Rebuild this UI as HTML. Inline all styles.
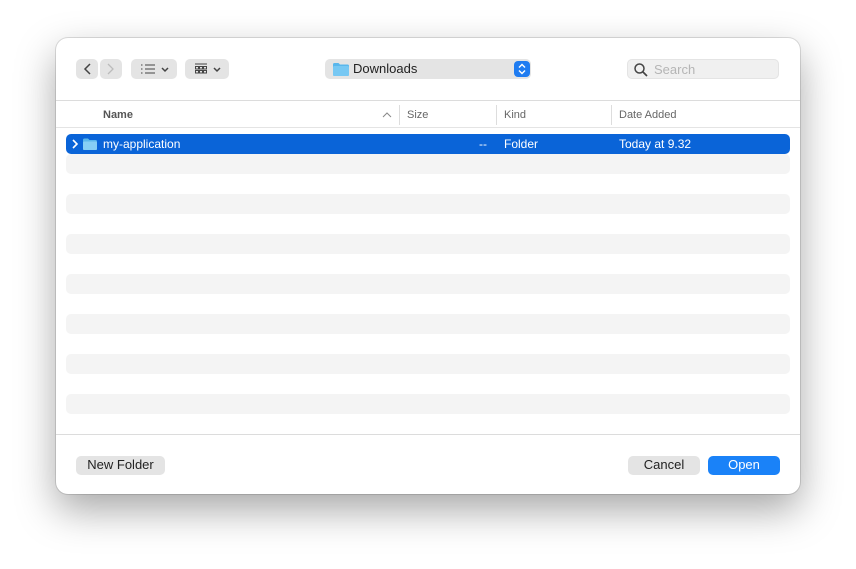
<!DOCTYPE html><html><head><style>
body{margin:0;width:856px;height:569px;background:#fff;font-family:"Liberation Sans",sans-serif;position:relative;overflow:hidden}
.win{position:absolute;left:56px;top:38px;width:744px;height:456px;background:#fff;border-radius:12px;box-shadow:0 0 0 1px rgba(0,0,0,.12),0 16px 40px rgba(0,0,0,.35)}
.a{position:absolute}
.btn{position:absolute;background:#e4e4e4;border-radius:5px}
.t{position:absolute;font-size:12px;color:#333;white-space:nowrap}
.h{font-size:11px;color:#666}
.row{position:absolute;left:10px;width:724px;height:20px;border-radius:5px;background:#f4f4f4}
.sep{position:absolute;width:1px;background:#ddd;top:67px;height:20px}
</style></head><body>
<div class="win">
<div class="btn" style="left:20px;top:21px;width:22px;height:20px"></div>
<div class="btn" style="left:44px;top:21px;width:22px;height:20px"></div>
<svg class="a" style="left:20px;top:21px" width="46" height="20"><path d="M14 5l-5 5 5 5" stroke="#444" stroke-width="1.5" fill="none"/><path d="M32 5l5 5-5 5" stroke="#bbb" stroke-width="1.3" fill="none"/></svg>
<div class="btn" style="left:75px;top:21px;width:46px;height:20px"></div>
<svg class="a" style="left:75px;top:21px" width="46" height="20"><g stroke="#444" stroke-width="1.1"><path d="M14 6h10M14 10h10M14 14h10M10 6h1.5M10 10h1.5M10 14h1.5"/><path d="M31 9l3 3 3-3" fill="none" stroke-width="1.5"/></g></svg>
<div class="btn" style="left:129px;top:21px;width:44px;height:20px"></div>
<svg class="a" style="left:129px;top:21px" width="44" height="20"><g stroke="#444" stroke-width="1" fill="none"><path d="M10 5h12"/><rect x="10.5" y="7.5" width="3" height="2.5"/><rect x="14.5" y="7.5" width="3" height="2.5"/><rect x="18.5" y="7.5" width="3" height="2.5"/><rect x="10.5" y="11.5" width="3" height="2.5"/><rect x="14.5" y="11.5" width="3" height="2.5"/><rect x="18.5" y="11.5" width="3" height="2.5"/><path d="M29 9l3 3 3-3" stroke-width="1.5"/></g></svg>
<div class="btn" style="left:269px;top:21px;width:206px;height:20px"></div>
<svg class="a" style="left:277px;top:24px" width="16" height="14"><path d="M0 2.5q0-1.5 1.5-1.5h4l1.5 1.5h7.5q1.5 0 1.5 1.5v8.5q0 1.5-1.5 1.5h-13q-1.5 0-1.5-1.5z" fill="#5ab7ec"/><rect x="0" y="4" width="16" height="10" rx="1.5" fill="#77c8f3"/></svg>
<div class="t" style="left:297px;top:23px;font-size:13px;color:#222">Downloads</div>
<div class="a" style="left:458px;top:23px;width:16px;height:16px;background:#1f7cf1;border-radius:4px"></div>
<svg class="a" style="left:458px;top:23px" width="16" height="16"><path d="M5 6.5l3-3 3 3M5 9.5l3 3 3-3" stroke="#fff" stroke-width="1.4" fill="none"/></svg>
<div class="a" style="left:571px;top:21px;width:152px;height:20px;background:#f0f0f0;border-radius:5px;box-shadow:inset 0 0 0 1px #e4e4e4"></div>
<svg class="a" style="left:577px;top:24px" width="16" height="16"><circle cx="6.5" cy="6.5" r="4.5" stroke="#444" stroke-width="1.5" fill="none"/><path d="M10 10l4 4" stroke="#444" stroke-width="1.7"/></svg>
<div class="t" style="left:598px;top:24px;font-size:13px;color:#b5b5b5">Search</div>
<div class="a" style="left:0;top:62px;width:744px;height:1px;background:#dcdcdc"></div>
<div class="t h" style="left:47px;top:71px;font-weight:bold;color:#555">Name</div>
<svg class="a" style="left:326px;top:73px" width="10" height="8"><path d="M1 6l4-4 4 4" stroke="#888" fill="none"/></svg>
<div class="sep" style="left:343px"></div>
<div class="t h" style="left:351px;top:71px">Size</div>
<div class="sep" style="left:440px"></div>
<div class="t h" style="left:448px;top:71px">Kind</div>
<div class="sep" style="left:555px"></div>
<div class="t h" style="left:563px;top:71px">Date Added</div>
<div class="a" style="left:0;top:89px;width:744px;height:1px;background:#e4e4e4"></div>
<div class="row" style="top:96px;background:#0a64d8"></div>
<svg class="a" style="left:15px;top:100px" width="8" height="12"><path d="M2 2l4 4-4 4" stroke="#fff" stroke-width="1.6" fill="none"/></svg>
<svg class="a" style="left:27px;top:100px" width="14" height="12"><path d="M0 2q0-1.5 1.5-1.5h3.5l1.5 1.5h6q1.5 0 1.5 1.5v7q0 1.5-1.5 1.5h-11q-1.5 0-1.5-1.5z" fill="#5ab7ec"/><rect x="0" y="3.5" width="14" height="8.5" rx="1.3" fill="#86cff5"/></svg>
<div class="t" style="left:47px;top:99px;color:#fff">my-application</div>
<div class="t" style="left:423px;top:99px;color:#fff">--</div>
<div class="t" style="left:448px;top:99px;color:#fff">Folder</div>
<div class="t" style="left:563px;top:99px;color:#fff">Today at 9.32</div>
<div class="row" style="top:116px"></div>
<div class="row" style="top:156px"></div>
<div class="row" style="top:196px"></div>
<div class="row" style="top:236px"></div>
<div class="row" style="top:276px"></div>
<div class="row" style="top:316px"></div>
<div class="row" style="top:356px"></div>
<div class="a" style="left:0;top:396px;width:744px;height:1px;background:#dcdcdc"></div>
<div class="btn" style="left:20px;top:418px;width:89px;height:19px"></div>
<div class="t" style="left:20px;top:419px;width:89px;text-align:center;font-size:13px;color:#222">New Folder</div>
<div class="btn" style="left:572px;top:418px;width:72px;height:19px"></div>
<div class="t" style="left:572px;top:419px;width:72px;text-align:center;font-size:13px;color:#222">Cancel</div>
<div class="a" style="left:652px;top:418px;width:72px;height:19px;background:#1a82f8;border-radius:5px"></div>
<div class="t" style="left:652px;top:419px;width:72px;text-align:center;font-size:13px;color:#fff">Open</div>
</div>
</body></html>
